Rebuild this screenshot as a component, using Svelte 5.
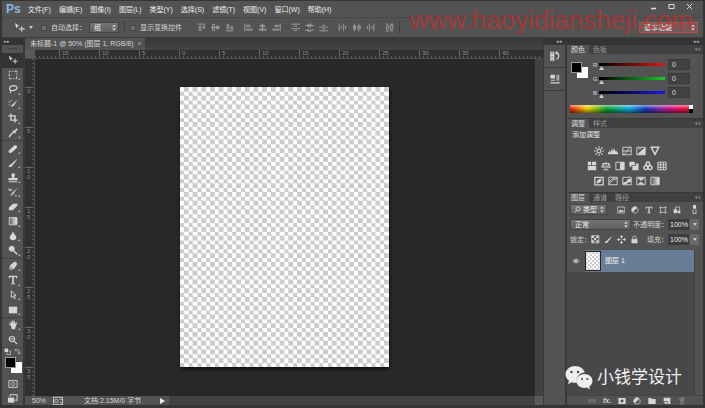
<script>
  // Each icon is drawn on a 12x12 grid: f = filled shapes, s = stroked lines
  const icons = {
    move: { f: 'M1 1L6 4.5L3.8 5L2.5 7Z', s: 'M8.5 4.5V10.5M5.5 7.5H11.5' },
    marquee: { s: 'M1.5 3V1.5H3M4.5 1.5H6M7.5 1.5H10.5V3M10.5 4.5V6M10.5 7.5V10.5H9M7.5 10.5H6M4.5 10.5H1.5V9M1.5 7.5V4.5' },
    lasso: { s: 'M3.5 7.5C1 6.5 1 3.5 4 2.5C7 1.5 11 2 11 4.5C11 7 6 8.5 3.5 7.5C2 8.5 3.5 9 3 11', w: 1.4 },
    quick: { f: 'M11.5 1L7 8C5.5 9.5 4 8.8 3 8.5C4.5 8 4.5 6.5 6 6Z', s: 'M1.5 4.5V3M3 2H4.5M1.5 6.5V7.5' },
    crop: { s: 'M3.5 0.5V8.5H11.5M0.5 3.5H8.5V11.5', w: 1.6 },
    dropper: { f: 'M6.5 2.5L8 3.2L9.5 0.8C10.5 -0.2 12.2 1.5 11.2 2.7L9.2 4.3L9.8 5.4L8.5 6.6L5.4 3.6Z', s: 'M7 4.5L2.5 9L1.5 11', w: 1.6 },
    heal: { f: 'M0.8 8L7.5 1.8C9.5 0.5 12 2.5 10.5 4.7L4.2 10.4C2.2 11.6 0 9.8 0.8 8Z' },
    brush: { f: 'M11.8 0.5L6.2 8L4.4 6.6ZM4.2 7L5.9 8.4C5 10.8 2.5 11 0.3 10.7C2.5 9.5 2.2 7.3 4.2 7Z' },
    stamp: { f: 'M4 1.5C5 -0.2 7.5 -0.2 8.3 1.5C8.7 3 7.5 4 7.5 6H11.5V8.8H0.5V6H4.8C4.8 4 3.7 3 4 1.5ZM1 9.8H11V11.2H1Z' },
    history: { f: 'M11.5 1L7 7.5C6 9.5 4 10.5 2.5 10C4.5 9 4.5 7 5.7 6.4Z', s: 'M1 3.5H5.5M2.5 1.5L1 3.5L3 5M8 10.5H10.5' },
    eraser: { f: 'M0.8 7L6 2H11.4L11.2 4.5L5.8 10H1Z' },
    gradient: { grad: true, s: 'M1.5 2H10.5V10.5H1.5Z' },
    drop: { f: 'M6 0.5C7 3.5 10 5.2 10 7.8C10 12 2 12 2 7.8C2 5.2 5 3.5 6 0.5Z' },
    dodge: { f: 'M4.5 1A3.5 3.5 0 1 1 4.4 1Z', s: 'M6.5 6.5L11 11', w: 1.8 },
    pen: { f: 'M11.2 3.2L8.3 0.5L3 4.5L1 10.4L5 6.8L5.5 7.4L2 11L7.8 9Z' },
    type: { f: 'M1 1H11V4H9.8L9.3 2.4H7V9.8L8.5 10.2V11H3.5V10.2L5 9.8V2.4H2.7L2.2 4H1Z' },
    select: { s: 'M4 1V9L6 7L7.5 10.5L9 9.8L7.4 6.5H9.6Z' },
    rect: { f: 'M1 2H11V10H1Z' },
    hand: { f: 'M3.5 7L1 4.8C0.8 3.7 2 3.7 3.5 5.2L3 2C3.3 1 4.1 1.3 4.3 2L5 4.3V1C5.4 0.2 6.3 0.3 6.4 1.1V4.2L7.3 1.5C7.8 0.8 8.7 1.2 8.5 2L8.2 4.8L9.8 3C10.5 2.6 11.1 3.2 10.8 3.9L9 8.5L8.3 11H4.5Z' },
    zoom: { s: 'M4.8 1.5A3.2 3.2 0 1 1 4.7 1.5M3.2 4.7H6.4M7.3 7.3L11 11', w: 1.5 },
    mask: { s: 'M1 2H11V10H1ZM6 4A2 2 0 1 1 5.9 4' },
    screens: { f: 'M1 5H8V10.5H1Z', s: 'M3.5 4V2H11V8H9' },
    // alignment
    al1: { s: 'M1 1.5H11M3 4V10H5V4ZM8 4V7H10V4Z' },
    al2: { s: 'M0 6H12M2 2V10H4.5V2ZM7.5 4V8H10V4Z' },
    al3: { s: 'M1 10.5H11M3 2V8H5V2ZM8 5V8H10V5Z' },
    al4: { s: 'M1 1V11M3 3H8V4.5H3ZM3 8H11V9.5H3Z' },
    al5: { s: 'M6 1V11M3 3H9V4.5H3ZM1.5 8H10.5V9.5H1.5Z' },
    al6: { s: 'M11 1V11M4 3H9V4.5H4ZM1 8H9V9.5H1Z' },
    di1: { s: 'M0 1.5H12M0 7.5H12M4 4H8M4 10H8' },
    di2: { s: 'M0 3.5H12M0 9.5H12M4 1.5H8V5H4ZM4 8V11H8' },
    di3: { s: 'M0 5.5H12M0 10.5H12M4 3H8M4 8H8' },
    di4: { s: 'M1.5 1V11M7.5 1V11M4 4V8M10 4V8' },
    di5: { s: 'M3.5 1V11M9 1V11M2 4H5V8H2ZM8 4H11V8H8Z' },
    di6: { s: 'M4.5 1V11M10.5 1V11M2 4V8M8 4V8' },
    di7: { s: 'M1 1.5H5M7 1.5H11M1 10.5H5M7 10.5H11M2 4H5V8H2ZM7.5 3V8.5H10.5V3Z' },
    // adjustments
    sun: { s: 'M6 3.7A2.3 2.3 0 1 1 5.9 3.7M6 0V2M6 10V12M0 6H2M10 6H12M1.8 1.8L3.2 3.2M8.8 8.8L10.2 10.2M1.8 10.2L3.2 8.8M8.8 3.2L10.2 1.8', w: 1.4 },
    levels: { f: 'M0 10V7L1 8L2 5L3 8L4 3L5 7L6 2L7 6L8 3L9 7L10 5L11 8L12 7V10Z' },
    curves: { s: 'M1 1.5H11V10.5H1ZM1 10.5C6 10.5 6 1.5 11 1.5M1 6H11' },
    exposure: { s: 'M1 1.5H11V10.5H1Z', f: 'M1 10.5L11 1.5V10.5ZM2.5 3H6V4H2.5Z' },
    vib: { s: 'M1.5 1.5H10.5L6 10Z', w: 1.8 },
    hue: { f: 'M1 1H5V5H1ZM6 1H11V5H6ZM1 6H11V11H1Z' },
    balance: { s: 'M6 1V10M2 3H10M3 10.5H9M2.5 3L0.8 7.5H4.2ZM9.5 3L7.8 7.5H11.2Z' },
    bw: { s: 'M1 1.5H11V10.5H1Z', f: 'M6 1.5H11V10.5H6Z' },
    photo: { f: 'M0.5 1H7V5H3V7H0.5ZM4 6H8.5V3H11.5V11H4Z', s: 'M6.5 4.5L9 7' },
    mixer: { s: 'M6 1.3A2.3 2.3 0 1 1 5.9 1.3M3.5 5.6A2.3 2.3 0 1 1 3.4 5.6M8.5 5.6A2.3 2.3 0 1 1 8.4 5.6', w: 1.8 },
    lookup: { s: 'M1 1.5H11V10.5H1ZM4.3 1.5V10.5M7.7 1.5V10.5M1 4.5H11M1 7.5H11' },
    invert: { s: 'M1 1.5H11V10.5H1Z', f: 'M3 9C3 5 5 3.5 9 3C9 7 7 8.8 3 9Z', w: 1.5 },
    poster: { s: 'M1 1.5H11V10.5H1ZM1 10L6 5L11 3M1 7L6 3L9 2' },
    thresh: { s: 'M1 1.5H11V10.5H1Z', f: 'M1 8L5 7L7 4L11 3V7L7 8L5 10H1Z' },
    selcol: { s: 'M1 1.5H11V10.5H1Z', f: 'M1.5 2H10.5L6 6ZM2 10L6 7L10 10Z' },
    gmap: { grad: true, s: 'M1 1.5H11V10.5H1Z' },
    // layers
    img: { s: 'M1 1.5H11V10.5H1Z', f: 'M2 9L5 5L7 7L8.5 5.5L10 9Z' },
    adj: { s: 'M6 1.2A4.8 4.8 0 1 1 5.9 1.2', f: 'M2.6 9.4L9.4 2.6A4.8 4.8 0 0 0 2.6 9.4Z' },
    shape: { s: 'M2.5 0.5V11.5M9.5 0.5V11.5M0.5 2.5H11.5M0.5 9.5H11.5' },
    smart: { s: 'M4 1.5H10V8H4Z', f: 'M1 5H6V11H1ZM7 7H11V11H7Z' },
    toggle: { f: 'M4 0H8V5H4Z', s: 'M4 6V11.5H8V6' },
    checker: { f: 'M1 1H4V4H1ZM7 1H10V4H7ZM4 4H7V7H4ZM1 7H4V10H1ZM7 7H10V10H7Z', s: 'M1 1H10.5V10.5H1Z' },
    cross: { s: 'M6 1V4.5M6 7.5V11M1 6H4.5M7.5 6H11M4.5 2.5L6 1L7.5 2.5M4.5 9.5L6 11L7.5 9.5M2.5 4.5L1 6L2.5 7.5M9.5 4.5L11 6L9.5 7.5', w: 1.4 },
    lock: { f: 'M2 5.5H10V11H2Z', s: 'M3.7 5.5V3.5C3.7 0.8 8.3 0.8 8.3 3.5V5.5' },
    eye: { s: 'M1 6C3.5 2.3 8.5 2.3 11 6C8.5 9.5 3.5 9.5 1 6Z', f: 'M6 4A2 2 0 1 1 5.9 4Z' },
    link: { s: 'M5 4H2.5C0 4 0 8 2.5 8H5M7 4H9.5C12 4 12 8 9.5 8H7M4 6H8' },
    lmask: { f: 'M0.5 1.5H11.5V10.5H0.5ZM6 3.7A2.3 2.3 0 1 0 6.1 3.7Z' },
    folder: { f: 'M0.5 1.5H5L6 3H11.5V10.5H0.5Z' },
    fresh: { f: 'M1 1H11V10.5H7V6.5H1ZM1 7.5H6V10.5H4Z' },
    trash: { s: 'M1.5 3H10.5M4.5 3V1.5H7.5V3M2.5 5H9.5M3 7.5H9M3 10.5H9' },
    // collapsed dock
    hist: { s: 'M1 1.5H4.5V4H1ZM1 5.5H4.5V7.5H1ZM1 9H4.5V11H1ZM7 2C11 2 12 8 7.5 10M7 2L8.5 0.5M7 2L8.5 4', w: 1.4 },
    props: { f: 'M0.5 1H6V5.5H0.5ZM0.5 10H11.5V11.5H0.5Z', s: 'M1 7.5H6M8.5 1V8M10.5 1V8' },
    disk: { s: 'M0.5 1.5H11.5V10.5H0.5ZM4 4A2 2 0 1 1 3.9 4M8 4H10.5M8 7L10.5 9' },
    def: { f: 'M1 1H7V7H1Z', s: 'M8 5H11V11H5V8' },
    swap: { s: 'M2 3.5H7.5C9 3.5 9 5 9 10M4 1L1.5 3.5L4 6M6.5 8L9 10.5L11.5 8' },
  };

  const menus = ['文件(F)', '编辑(E)', '图像(I)', '图层(L)', '类型(Y)', '选择(S)', '滤镜(T)', '视图(V)', '窗口(W)', '帮助(H)'];
  const tools = [
    ['move', '移动'], ['marquee', '选框'], ['lasso', '套索'], ['quick', '快速选择'], ['crop', '裁剪'],
    ['dropper', '吸管'], ['heal', '修复画笔'], ['brush', '画笔'], ['stamp', '图章'], ['history', '历史画笔'],
    ['eraser', '橡皮擦'], ['gradient', '渐变'], ['drop', '模糊'], ['dodge', '减淡'], ['pen', '钢笔'],
    ['type', '文字'], ['select', '路径选择'], ['rect', '矩形'], ['hand', '抓手'], ['zoom', '缩放'],
  ];
  const groupStarts = ['heal', 'pen', 'hand'];
  const alignGroups = [['al1', 'al2', 'al3'], ['al4', 'al5', 'al6'], ['di1', 'di2', 'di3'], ['di4', 'di5', 'di6'], ['di7']];
  const rulerX = [15, 10, 5, 0, 5, 10, 15, 20, 25, 30, 35, 40];
  const rulerY = [0, 5, 10, 15, 20, 25, 30, 35];
  const adjustRows = [
    ['sun', 'levels', 'curves', 'exposure', 'vib'],
    ['hue', 'balance', 'bw', 'photo', 'mixer', 'lookup'],
    ['invert', 'poster', 'thresh', 'selcol', 'gmap'],
  ];
  let channels = $state([
    { name: 'R', color: '#e01818', value: 0 },
    { name: 'G', color: '#18c828', value: 0 },
    { name: 'B', color: '#1818e0', value: 0 },
  ]);
  let tool = $state('move');
</script>

{#snippet icon(name, size = 9)}
  {@const i = icons[name]}
  <svg class="icon" width={size} height={size} viewBox="0 0 12 12" aria-hidden="true">
    {#if i.grad}
      <defs>
        <linearGradient id="g-{name}"><stop offset="0" stop-color="#555" /><stop offset="1" stop-color="#eee" /></linearGradient>
      </defs>
      <path d="M1 2H11V10H1Z" fill="url(#g-{name})" />
    {/if}
    {#if i.f}<path d={i.f} fill="currentColor" fill-rule="evenodd" />{/if}
    {#if i.s}<path d={i.s} fill="none" stroke="currentColor" stroke-width={i.w ?? 1.1} />{/if}
  </svg>
{/snippet}

{#snippet tabs(names)}
  <div class="tabs">
    {#each names as n, k}<button class:on={k === 0}>{n}</button>{/each}
    <button class="flyout" aria-label="面板菜单">▾≡</button>
  </div>
{/snippet}

<div class="app">
  <header class="menubar">
    <span class="logo">Ps</span>
    <nav>{#each menus as m}<button>{m}</button>{/each}</nav>
    <div class="winctl">
      <button aria-label="最小化"><svg width="7" height="7" viewBox="0 0 7 7"><path d="M1 5.5H6" stroke="#ddd" stroke-width="1.5" /></svg></button>
      <button aria-label="最大化"><svg width="7" height="7" viewBox="0 0 7 7"><path d="M1 1.5H6V5.5H1Z" stroke="#ddd" fill="none" /></svg></button>
      <button aria-label="关闭"><svg width="7" height="7" viewBox="0 0 7 7"><path d="M1 1L6 6M6 1L1 6" stroke="#ddd" /></svg></button>
    </div>
  </header>

  <div class="options">
    <button class="current" aria-label="移动工具">{@render icon('move', 11)}<i class="caret"></i></button>
    <label><input type="checkbox" />自动选择：</label>
    <span class="pick group"><select aria-label="自动选择对象"><option>组</option><option>图层</option></select></span>
    <i class="bar"></i>
    <label><input type="checkbox" />显示变换控件</label>
    <div class="aligns">
      {#each alignGroups as g}
        <div>{#each g as a}<button aria-label={a}>{@render icon(a)}</button>{/each}</div>
      {/each}
    </div>
    <i class="bar"></i>
    <span class="pick workspace"><select aria-label="工作区"><option>基本功能</option></select></span>
  </div>

  <div class="main">
    <aside class="toolbar">
      <div class="grip">▸▸</div>
      <div class="handle"></div>
      <div class="tools">
        {#each tools as [id, label]}
          <button class:on={tool === id} class:sep={groupStarts.includes(id)} aria-label={label} onclick={() => (tool = id)}>
            {@render icon(id, 10)}
            {#if id !== 'move' && id !== 'zoom'}<i class="corner"></i>{/if}
          </button>
        {/each}
      </div>
      <div class="mini">{@render icon('def', 7)}{@render icon('swap', 7)}</div>
      <div class="swatches small"><i class="fg"></i><i class="bg"></i></div>
      <button class="foot" aria-label="快速蒙版">{@render icon('mask', 10)}</button>
      <button class="foot" aria-label="屏幕模式">{@render icon('screens', 11)}</button>
    </aside>

    <section class="doc">
      <div class="doctabs"><button>未标题-1 @ 50% (图层 1, RGB/8)<span>×</span></button></div>
      <div class="rulerx">
        <i class="origin"></i>
        <div class="marks">{#each rulerX as n}<span>{n}</span>{/each}</div>
      </div>
      <div class="work">
        <div class="rulery">{#each rulerY as n}<span>{n}</span>{/each}</div>
        <div class="stage"><div class="canvas"></div></div>
        <div class="vscroll"></div>
      </div>
      <footer class="status">
        <span class="pct">50%</span>
        {@render icon('disk', 10)}
        <span class="info">文档:2.15M/0 字节</span>
        <button aria-label="状态选项"><svg width="5" height="6" viewBox="0 0 5 6"><path d="M0 0L5 3L0 6Z" fill="#eee" /></svg></button>
        <div class="hscroll"></div><i class="sizer"></i>
      </footer>
    </section>

    <aside class="dock">
      <div class="grip right">◂◂</div>
      <button aria-label="历史记录">{@render icon('hist', 10)}</button>
      <button aria-label="属性">{@render icon('props', 10)}</button>
    </aside>

    <aside class="panels">
      <div class="grip right">▸▸</div>
      <section class="color">
        {@render tabs(['颜色', '色板'])}
        <div class="mix">
          <div class="swatches"><i class="fg"></i><i class="bg"></i></div>
          <div class="channels">
            {#each channels as c}
              <div class="channel">
                <label for="ch-{c.name}">{c.name}</label>
                <input id="ch-{c.name}" type="range" min="0" max="255" bind:value={c.value} style="--c: {c.color}" />
                <input type="text" aria-label="{c.name} 数值" bind:value={c.value} />
              </div>
            {/each}
          </div>
        </div>
        <div class="spectrum"><i></i></div>
      </section>

      <section class="adjust">
        {@render tabs(['调整', '样式'])}
        <p>添加调整</p>
        {#each adjustRows as row}
          <div class="adjrow">{#each row as a}<button aria-label={a}>{@render icon(a, 10)}</button>{/each}</div>
        {/each}
      </section>

      <section class="layers">
        {@render tabs(['图层', '通道', '路径'])}
        <div class="row">
          <span class="pick kind"><svg width="7" height="7" viewBox="0 0 12 12"><path d="M7 1.5A3.5 3.5 0 1 1 6.9 1.5M4.5 7.5L1 11" fill="none" stroke="#ddd" stroke-width="1.6" /></svg><select aria-label="图层筛选"><option>类型</option></select></span>
          <div class="filters">
            {#each ['img', 'adj', 'type', 'shape', 'smart'] as f}<button aria-label={f}>{@render icon(f, 8)}</button>{/each}
          </div>
          <button aria-label="筛选开关">{@render icon('toggle', 9)}</button>
        </div>
        <div class="row">
          <span class="pick blend"><select aria-label="混合模式"><option>正常</option></select></span>
          <label class="amount">不透明度：<input type="text" value="100%" /></label>
          <button class="drop" aria-label="调整不透明度"><i class="caret"></i></button>
        </div>
        <div class="row">
          <span>锁定：</span>
          <div class="locks">{#each ['checker', 'brush', 'cross', 'lock'] as l}<button aria-label={l}>{@render icon(l, 9)}</button>{/each}</div>
          <label class="amount">填充：<input type="text" value="100%" /></label>
          <button class="drop" aria-label="调整填充"><i class="caret"></i></button>
        </div>
        <div class="list">
          <div class="layer">
            <button class="vis" aria-label="图层可见性">{@render icon('eye', 8)}</button>
            <div class="sel"><i class="thumb"></i><span>图层 1</span></div>
          </div>
        </div>
        <div class="actions">
          <button class="dim" aria-label="链接图层">{@render icon('link', 8)}</button>
          <button class="fx">fx.</button>
          {#each ['lmask', 'adj', 'folder', 'fresh'] as a}<button aria-label={a}>{@render icon(a, 8)}</button>{/each}
          <button class="dim" aria-label="删除图层">{@render icon('trash', 8)}</button>
        </div>
      </section>
    </aside>
  </div>

  <div class="site">www.haoyidiansheji.com</div>
  <div class="brand">
    <svg width="28" height="26" viewBox="0 0 28 26" aria-hidden="true">
      <path d="M10 1C4.500 1 0.500 4.800 0.500 9.300C0.500 12 1.900 14.300 4 15.800L3 19L6.700 17.200C8.500 17.800 10.500 17.900 12 17.500C10.500 12 15 7.500 19.800 7.600C18.800 3.800 14.800 1 10 1Z" fill="#eee" />
      <path d="M19.500 9C15 9 11.500 12 11.500 16C11.500 20.500 16 24 21.800 22.600L25 24.500L24.200 21.500C26.300 20.200 27.500 18.200 27.500 16C27.500 12 24 9 19.500 9Z" fill="#eee" />
      <g fill="#454545"><circle cx="6.500" cy="7" r="1.200" /><circle cx="13" cy="7" r="1.200" /><circle cx="17" cy="14" r="1" /><circle cx="22.300" cy="14" r="1" /></g>
    </svg>
    <span>小钱学设计</span>
  </div>
</div>

<style>
  :global(body) { margin: 0; background: #535353; }
  .app, .app * { box-sizing: border-box; }
  .app {
    position: relative; height: 100vh; display: flex; flex-direction: column; overflow: hidden;
    border: 2px solid #353535; border-width: 1px 2px 3px 2px; background: #535353; color: #d6d6d6;
    font: 7px/10px "Liberation Sans", "Noto Sans CJK SC", sans-serif; white-space: nowrap;
  }
  button, input, select { font: inherit; color: inherit; background: none; border: 0; padding: 0; margin: 0; min-width: 0; }
  button { display: flex; align-items: center; justify-content: center; }
  .icon { display: block; flex: none; }
  p { margin: 0; }

  .menubar { display: flex; align-items: center; height: 17px; flex: none; padding: 1px 10px 0 4px; border-bottom: 1px solid #484848; }
  .logo { width: 22px; color: #8db9e0; font-size: 12px; font-weight: bold; line-height: 15px; }
  nav { display: flex; gap: 8px; flex: 1; color: #eee; }
  .winctl { display: flex; gap: 11px; align-self: flex-start; padding-top: 1px; }

  .options { display: flex; align-items: center; height: 20px; flex: none; padding: 0 5px 0 12px; border-bottom: 1px solid #3c3c3c; }
  .current { gap: 4px; margin-right: 8px; }
  .caret { border: 2px solid transparent; border-top: 3px solid #ccc; border-bottom: 0; }
  .options label { display: flex; align-items: center; gap: 4px; }
  input[type="checkbox"] { appearance: none; width: 6px; height: 6px; background: #6b6b6b; border: 1px solid #444; }
  .pick { position: relative; display: flex; align-items: center; height: 11px; background: linear-gradient(#747474, #606060); border: 1px solid #444; color: #eee; }
  .pick select { appearance: none; flex: 1; padding: 0 4px; height: 9px; line-height: 9px; outline: 0; }
  .pick::after { content: ""; width: 4px; height: 6px; margin-right: 2px; background: #ddd; clip-path: polygon(50% 0, 100% 35%, 0 35%, 0 65%, 100% 65%, 50% 100%, 0 65%, 0 35%); }
  .group { width: 30px; margin-left: 3px; }
  .bar { width: 1px; height: 13px; background: #424242; margin: 0 5px; }
  .aligns { display: flex; flex: none; gap: 10px; margin-left: 15px; color: #a8a8a8; }
  .aligns > div { display: flex; gap: 5px; }
  .workspace { width: 59px; margin-left: auto; border-color: #c04a48; background: #765a58; }

  .main { flex: 1; min-height: 0; display: flex; background: #383838; }
  .grip { height: 7px; flex: none; background: #343434; color: #bbb; font-size: 5px; line-height: 7px; padding-left: 2px; }
  .grip.right { text-align: right; padding-right: 3px; }

  .toolbar { width: 22px; flex: none; display: flex; flex-direction: column; background: #535353; border-right: 1px solid #383838; }
  .handle { height: 2px; margin: 3px 6px; border-top: 1px dotted #333; }
  .tools { flex: 1; display: flex; flex-direction: column; }
  .tools button { position: relative; flex: 1; width: 100%; }
  .tools button.on { background: #343434; }
  .tools button.sep { border-top: 1px solid #434343; }
  .corner { position: absolute; right: 3px; bottom: 2px; border: 1px solid #bbb; border-top-color: transparent; border-left-color: transparent; }
  .mini { display: flex; justify-content: center; gap: 3px; height: 9px; border-top: 1px solid #484848; }
  .swatches { position: relative; width: 17px; height: 16px; flex: none; }
  .swatches i { position: absolute; width: 11px; height: 11px; }
  .swatches .fg { left: 0; top: 0; background: #000; border: 1px solid #999; z-index: 1; }
  .swatches .bg { right: 0; bottom: 0; background: #fff; }
  .swatches.small { margin: 1px auto 4px 3px; }
  .foot { height: 14px; }

  .doc { flex: 1; min-width: 0; display: flex; flex-direction: column; background: #282828; margin-left: 1px; }
  .doctabs { height: 12px; flex: none; display: flex; background: linear-gradient(#393939, #444); }
  .doctabs button { background: #535353; padding: 0 3px 0 5px; gap: 4px; }
  .doctabs span { color: #aaa; }
  .rulerx { display: flex; flex: none; height: 9px; background: #303030; border-bottom: 1px solid #4c4c4c; }
  .origin { width: 10px; background: #5a5a5a; }
  .marks { flex: 1; display: flex; overflow: hidden; padding-left: 24px; background: repeating-linear-gradient(90deg, #585858 0 1px, transparent 1px 4px) bottom / 100% 2px no-repeat; }
  .marks span { flex: 0 0 40px; border-left: 1px solid #666; padding-left: 2px; color: #8c8c8c; font-size: 6px; line-height: 7px; }
  .work { flex: 1; min-height: 0; display: flex; }
  .rulery { width: 10px; flex: none; overflow: hidden; padding-top: 28px; border-right: 1px solid #4c4c4c; background: repeating-linear-gradient(#585858 0 1px, transparent 1px 4px) right / 2px 100% no-repeat #303030; }
  .rulery span { display: block; height: 40px; border-top: 1px solid #666; padding-left: 2px; color: #8c8c8c; font-size: 6px; line-height: 6px; width: 7px; word-break: break-all; white-space: normal; }
  .stage { flex: 1; display: grid; place-items: center; padding: 0 1px 1px 0; }
  .canvas { width: 42%; aspect-ratio: 3 / 4; box-shadow: 1px 2px 3px #111; background: repeating-conic-gradient(#ccc 0 25%, #fff 0 50%) 0 0 / calc(100% / 24) calc(100% / 32); }
  .vscroll { width: 8px; background: #424242; }
  .status { display: flex; align-items: center; height: 9px; flex: none; background: #535353; }
  .pct { width: 24px; padding-left: 7px; margin-right: 4px; }
  .pct + :global(svg) { margin-right: 21px; }
  .info { margin-right: 19px; }
  .status button { margin-right: 4px; }
  .hscroll { flex: 1; height: 9px; background: #424242; }
  .sizer { width: 8px; height: 9px; background: #5a5a5a; }

  .dock { width: 21px; flex: none; margin-left: 1px; background: #535353; }
  .dock button { width: 100%; height: 23px; border-bottom: 1px solid #3c3c3c; }
  .panels { width: 136px; flex: none; margin-left: 2px; display: flex; flex-direction: column; }
  .panels section { background: #535353; margin-bottom: 1px; flex: none; }
  .tabs { display: flex; flex: none; height: 9px; background: #404040; color: #999; line-height: 9px; }
  .tabs button { padding: 0 4px; line-height: 9px; }
  .tabs .on { background: #535353; color: #ddd; }
  .tabs .flyout { margin-left: auto; padding-right: 2px; font-size: 5px; }

  .color { padding-bottom: 5px; }
  .mix { display: flex; padding: 5px 13px 7px 4px; gap: 5px; }
  .mix .swatches { margin-top: 3px; }
  .channels { flex: 1; min-width: 0; display: grid; gap: 3px; }
  .channel { display: flex; align-items: center; height: 11px; min-width: 0; }
  .channel label { width: 6px; flex: none; font-size: 6px; }
  .channel input[type="range"] { appearance: none; flex: 1; width: 0; height: 11px; outline: 0; }
  .channel input[type="range"]::-webkit-slider-runnable-track { height: 3px; background: linear-gradient(90deg, #000, var(--c)); }
  .channel input[type="range"]::-webkit-slider-thumb { appearance: none; width: 5px; height: 4px; margin-top: 3px; background: #ccc; clip-path: polygon(50% 0, 100% 100%, 0 100%); }
  .channel input[type="text"] { width: 22px; flex: none; height: 11px; margin-left: 3px; padding-left: 3px; background: #424242; border: 1px solid #3a3a3a; color: #ddd; }
  .spectrum {
    display: flex; justify-content: flex-end; height: 8px; margin: 0 10px 0 3px;
    background: linear-gradient(#fff8, transparent 45%, #0008), linear-gradient(90deg, #e02010, #f0d000 14%, #10a030 30%, #10a8d8 48%, #1838b8 62%, #a02098 76%, #e81060 88%, #e02020);
  }
  .spectrum i { width: 4px; background: linear-gradient(#fff 50%, #000 50%); }

  .adjust { padding-bottom: 4px; }
  .adjust p { padding: 1px 5px 2px; line-height: 12px; color: #e6e6e6; }
  .adjrow { display: flex; justify-content: center; gap: 4px; height: 15px; padding-right: 16px; align-items: center; }

  .panels .layers { flex: 1; min-height: 0; display: flex; flex-direction: column; margin: 0; }
  .row { display: flex; align-items: center; justify-content: space-between; height: 15px; flex: none; padding: 0 4px 0 3px; }
  .kind { width: 37px; padding-left: 3px; }
  .kind select { padding: 0 2px; }
  .filters { display: flex; gap: 6px; }
  .blend { width: 61px; }
  .amount { display: flex; align-items: center; margin-left: auto; }
  .amount input { width: 21px; height: 11px; padding-left: 2px; background: #3c3c3c; color: #eee; }
  .drop { width: 9px; height: 11px; background: #686868; margin-left: 1px; }
  .locks { display: flex; gap: 4px; }
  .list { flex: 1; margin: 3px 8px 0 0; border-right: 1px solid #404040; background: #484848; }
  .layer { display: flex; height: 22px; }
  .vis { width: 18px; background: #535353; }
  .sel { flex: 1; display: flex; align-items: center; gap: 4px; background: #6a7d96; color: #f4f4f4; }
  .thumb { width: 16px; height: 20px; border: 1px solid #222; outline: 1px solid #ddd; outline-offset: -2px; background: repeating-conic-gradient(#ccc 0 25%, #fff 0 50%) 0 0 / 4px 4px; }
  .actions { display: flex; align-items: center; gap: 7px; height: 10px; flex: none; padding-left: 21px; border-top: 1px solid #444; }
  .fx { font-style: italic; font-weight: bold; }
  .dim { opacity: 0.5; }

  .site { position: absolute; right: 10px; top: 4px; color: #d02a2aa6; font-size: 26px; line-height: 30px; pointer-events: none; }
  .brand { position: absolute; right: 21px; bottom: 14px; display: flex; align-items: center; gap: 4px; color: #f0f0f0; font-size: 17px; line-height: 26px; pointer-events: none; }
</style>
